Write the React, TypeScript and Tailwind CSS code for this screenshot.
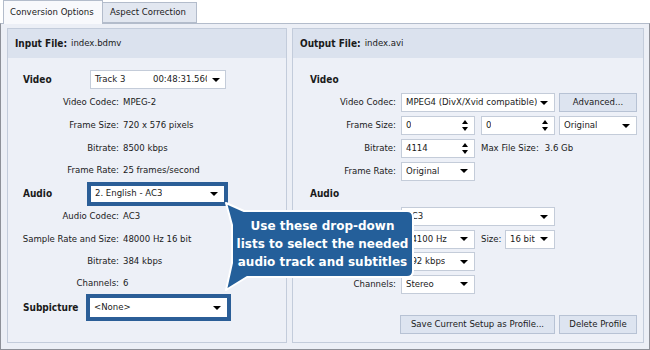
import type { ReactNode } from 'react';

function DownArrow() {
  return (
    <span className="ml-auto shrink-0 w-0 h-0 border-x-[4px] border-x-transparent border-t-[4px] border-t-black" />
  );
}

function SpinArrows() {
  return (
    <span className="ml-auto shrink-0 flex flex-col items-center gap-[3px]">
      <span className="w-0 h-0 border-x-[3.5px] border-x-transparent border-b-[4px] border-b-black" />
      <span className="w-0 h-0 border-x-[3.5px] border-x-transparent border-t-[4px] border-t-black" />
    </span>
  );
}

interface FieldProps {
  width: string;
  children?: ReactNode;
  kind?: 'select' | 'spin';
  bordered?: boolean;
  height?: string;
}

function Field({ width, children, kind = 'select', bordered = true, height = 'h-[19px]' }: FieldProps) {
  return (
    <div
      className={`${width} ${height} shrink-0 bg-white flex items-center pl-[4px] pr-[6px] whitespace-nowrap overflow-hidden ${
        bordered ? 'border border-[#c4ccd9]' : ''
      }`}
    >
      <span className="overflow-hidden">{children}</span>
      {kind === 'select' ? <DownArrow /> : <SpinArrows />}
    </div>
  );
}

function Button({ width, children }: { width: string; children: ReactNode }) {
  return (
    <div
      className={`${width} h-[19px] shrink-0 flex items-center justify-center bg-[#dde4f0] border border-[#b7c2d4] whitespace-nowrap`}
    >
      {children}
    </div>
  );
}

function InfoRow({ label, value, h }: { label: string; value: string; h: string }) {
  return (
    <div className={`${h} flex items-center`}>
      <span className="w-[111px] text-right">{label}</span>
      <span className="ml-[4px]">{value}</span>
    </div>
  );
}

function OutRow({ label, h, children }: { label?: string; h: string; children: ReactNode }) {
  return (
    <div className={`${h} flex items-center`}>
      <span className="w-[103px] text-right whitespace-nowrap">{label}</span>
      <div className="ml-[5px] flex items-center">{children}</div>
    </div>
  );
}

function PanelHeader({ title, file }: { title: string; file: string }) {
  return (
    <div className="h-[29px] bg-[#dbe2ee] flex items-center pl-[7px]">
      <span className="font-bold text-[10px]">{title}</span>
      <span className="ml-[4px]">{file}</span>
    </div>
  );
}

export default function App() {
  return (
    <div className="w-[650px] h-[350px] bg-white relative overflow-hidden font-['Tahoma','DejaVu_Sans_Condensed','Liberation_Sans',sans-serif] text-[9.5px] text-[#1a1a1a]">
      {/* tabs */}
      <div className="flex items-end h-[23px] pl-[3px]">
        <div className="relative z-10 -mb-px h-[24px] w-[100px] flex items-center pl-[6px] bg-[#f8f9fc] border border-b-0 border-[#b3bccb]">
          Conversion Options
        </div>
        <div className="h-[21px] w-[94px] flex items-center pl-[7px] bg-[#e2e7f0] border border-l-0 border-[#b3bccb]">
          Aspect Correction
        </div>
      </div>

      {/* content */}
      <div className="h-[327px] flex gap-[5px] pt-[4px] pl-[6px] pr-[5px] bg-[#eceff6] border border-[#8d9098] border-t-[#b3bccb]">
        {/* input panel */}
        <div className="w-[280px] h-[315px] border border-[#c3ccdb] bg-[#edf0f7] flex flex-col">
          <PanelHeader title="Input File:" file="index.bdmv" />
          <div className="pt-[10px]">
            <div className="h-[23px] flex items-center pl-[15px]">
              <span className="w-[67px] font-bold text-[10px]">Video</span>
              <div className="w-[136px] h-[19px] bg-white border border-[#c4ccd9] flex items-center pl-[4px] pr-[5px] whitespace-nowrap">
                <span className="w-[58px]">Track 3</span>
                <span className="w-[54px] overflow-hidden">00:48:31.560</span>
                <DownArrow />
              </div>
            </div>
            <InfoRow h="h-[23px]" label="Video Codec:" value="MPEG-2" />
            <InfoRow h="h-[23px]" label="Frame Size:" value="720 x 576 pixels" />
            <InfoRow h="h-[22px]" label="Bitrate:" value="8500 kbps" />
            <InfoRow h="h-[23px]" label="Frame Rate:" value="25 frames/second" />
            <div className="h-[23px] flex items-center pl-[15px]">
              <span className="w-[64px] font-bold text-[10px]">Audio</span>
              <div className="border-[4px] border-[#2b5e97]">
                <Field width="w-[133px]" height="h-[16px]" bordered={false}>
                  2. English - AC3
                </Field>
              </div>
            </div>
            <InfoRow h="h-[23px]" label="Audio Codec:" value="AC3" />
            <InfoRow h="h-[22px]" label="Sample Rate and Size:" value="48000 Hz 16 bit" />
            <InfoRow h="h-[22px]" label="Bitrate:" value="384 kbps" />
            <InfoRow h="h-[23px]" label="Channels:" value="6" />
            <div className="h-[25px] flex items-center pl-[15px]">
              <span className="w-[63px] font-bold text-[10px]">Subpicture</span>
              <div className="border-[4px] border-[#2b5e97]">
                <Field width="w-[137px]" bordered={false}>
                  {'<None>'}
                </Field>
              </div>
            </div>
          </div>
        </div>

        {/* output panel */}
        <div className="w-[352px] h-[315px] border border-[#c3ccdb] bg-[#edf0f7] flex flex-col">
          <PanelHeader title="Output File:" file="index.avi" />
          <div className="pt-[10px]">
            <div className="h-[23px] flex items-center pl-[17px] font-bold text-[10px]">Video</div>
            <OutRow h="h-[23px]" label="Video Codec:">
              <Field width="w-[154px]">MPEG4 (DivX/Xvid compatible)</Field>
              <div className="ml-[4px]">
                <Button width="w-[78px]">Advanced...</Button>
              </div>
            </OutRow>
            <OutRow h="h-[23px]" label="Frame Size:">
              <Field width="w-[74px]" kind="spin">0</Field>
              <div className="ml-[6px]">
                <Field width="w-[74px]" kind="spin">0</Field>
              </div>
              <div className="ml-[4px]">
                <Field width="w-[78px]">Original</Field>
              </div>
            </OutRow>
            <OutRow h="h-[23px]" label="Bitrate:">
              <Field width="w-[74px]" kind="spin">4114</Field>
              <span className="ml-[6px]">Max File Size:</span>
              <span className="ml-[6px]">3.6 Gb</span>
            </OutRow>
            <OutRow h="h-[22px]" label="Frame Rate:">
              <Field width="w-[74px]">Original</Field>
            </OutRow>
            <div className="h-[23px] flex items-center pl-[17px] font-bold text-[10px]">Audio</div>
            <OutRow h="h-[23px]" label="Audio Codec:">
              <Field width="w-[154px]">AC3</Field>
            </OutRow>
            <OutRow h="h-[22px]" label="Sample Rate:">
              <Field width="w-[74px]">44100 Hz</Field>
              <span className="ml-[6px] w-[24px]">Size:</span>
              <Field width="w-[50px]">16 bit</Field>
            </OutRow>
            <OutRow h="h-[23px]" label="Bitrate:">
              <Field width="w-[74px]">192 kbps</Field>
            </OutRow>
            <OutRow h="h-[22px]" label="Channels:">
              <Field width="w-[74px]">Stereo</Field>
            </OutRow>
            <div className="mt-[20px] flex items-center pl-[107px] gap-[4px]">
              <Button width="w-[155px]">Save Current Setup as Profile...</Button>
              <Button width="w-[78px]">Delete Profile</Button>
            </div>
          </div>
        </div>
      </div>

      {/* callout */}
      <div className="absolute left-[220px] top-[198px] w-[200px] h-[97px] z-20">
        <svg width="200" height="97" viewBox="0 0 200 97" className="absolute inset-0">
          <path
            d="M24 13 H187 Q193 13 193 19 V73 Q193 79 187 79 H27 L6 92 L12 65 V27 L6 5 Z"
            fill="#245f9a"
            stroke="#ffffff"
            strokeWidth="2"
            strokeLinejoin="round"
          />
        </svg>
        <div className="absolute left-[12px] top-[19px] w-[181px] text-center text-white font-bold text-[12px] leading-[18px] font-['DejaVu_Sans','Liberation_Sans',sans-serif]">
          Use these drop-down
          <br />
          lists to select the needed
          <br />
          audio track and subtitles
        </div>
      </div>
    </div>
  );
}
